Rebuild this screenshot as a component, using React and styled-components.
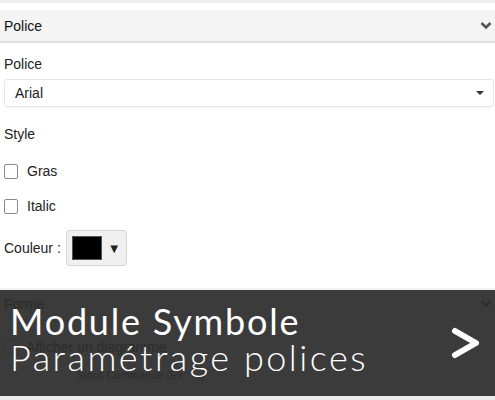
import styled, { createGlobalStyle } from 'styled-components';

const Global = createGlobalStyle`
  html, body {
    margin: 0;
    padding: 0;
    background: #fff;
    font-family: 'Liberation Sans', Arial, sans-serif;
    color: #222;
  }
`;

const Page = styled.div`
  position: relative;
  width: 495px;
  height: 400px;
  overflow: hidden;
  background: #fff;
`;

const TopStrip = styled.div`
  height: 3px;
  background: #efefef;
  margin-bottom: 7px;
`;

const SectionHeader = styled.div`
  display: flex;
  align-items: center;
  justify-content: space-between;
  height: 31px;
  padding: 0 3px 0 4px;
  background: #f4f4f4;
  border-bottom: 2px solid #dedede;
  font-size: 14px;
  color: #111;
`;

const Body = styled.div`
  display: flex;
  flex-direction: column;
  padding: 0 1px 0 4px;
  font-size: 14px;
`;

const Label = styled.div`
  height: 20px;
  line-height: 20px;
  margin-top: ${(p) => p.top || 0}px;
  color: #222;
`;

const Select = styled.div`
  display: flex;
  align-items: center;
  justify-content: space-between;
  height: 26px;
  margin-top: 5px;
  padding: 0 9px 0 10px;
  border: 1px solid #e6e6e6;
  border-radius: 3px;
  box-shadow: 0 1px 1px rgba(0, 0, 0, 0.03);
`;

const Caret = styled.span`
  width: 0;
  height: 0;
  border-left: 4px solid transparent;
  border-right: 4px solid transparent;
  border-top: 4px solid #333;
`;

const CheckRow = styled.label`
  display: flex;
  align-items: center;
  gap: 9px;
  height: 20px;
  margin-top: ${(p) => p.top}px;
`;

const Box = styled.span`
  width: 12px;
  height: 13px;
  border: 1px solid #8a8a8a;
  border-radius: 2px;
  background: #fff;
`;

const ColorRow = styled.div`
  display: flex;
  align-items: center;
  gap: 5px;
  margin-top: 14px;
`;

const ColorButton = styled.div`
  display: flex;
  align-items: center;
  gap: 6px;
  height: 34px;
  padding: 0 5px;
  border: 1px solid #d6d6d6;
  border-radius: 3px;
  background: #f0f0f0;
  font-size: 13px;
  color: #222;
`;

const Swatch = styled.span`
  width: 28px;
  height: 22px;
  background: ${(p) => p.color};
  border: 1px solid #555;
`;

const Faded = styled.div`
  margin-top: 22px;
`;

const Sub = styled.div`
  margin-top: ${(p) => p.top}px;
  padding-left: ${(p) => p.indent || 0}px;
  font-size: ${(p) => p.size || 14}px;
  display: flex;
  align-items: center;
  gap: 8px;
`;

const BottomStrip = styled.div`
  position: absolute;
  left: 0;
  right: 0;
  bottom: 0;
  height: 4px;
  background: #ececec;
`;

const Banner = styled.div`
  position: absolute;
  left: 0;
  right: 0;
  top: 290px;
  height: 106px;
  background: rgba(44, 44, 44, 0.93);
  display: flex;
  align-items: center;
  justify-content: space-between;
  padding: 0 14px 0 10px;
  box-sizing: border-box;
  color: #fff;
`;

const Titles = styled.div`
  display: flex;
  flex-direction: column;
  margin-top: -8px;
  font-family: 'Lato', 'Noto Sans', sans-serif;
`;

const Title = styled.div`
  font-size: 36px;
  line-height: 36px;
  font-weight: ${(p) => p.weight};
  letter-spacing: ${(p) => p.spacing}px;
`;

const Chevron = () => (
  <svg width="12" height="9" viewBox="0 0 12 9">
    <path d="M1.5 2 L6 6.5 L10.5 2" fill="none" stroke="#555" strokeWidth="2.6" />
  </svg>
);

const Next = () => (
  <svg width="30" height="34" viewBox="0 0 30 34">
    <path d="M4 5 L25 17 L4 29" fill="none" stroke="#fff" strokeWidth="6" strokeLinecap="round" strokeLinejoin="round" />
  </svg>
);

export default function App() {
  return (
    <Page>
      <Global />
      <TopStrip />
      <SectionHeader>
        <span>Police</span>
        <Chevron />
      </SectionHeader>
      <Body>
        <Label top={11}>Police</Label>
        <Select>
          <span>Arial</span>
          <Caret />
        </Select>
        <Label top={17}>Style</Label>
        <CheckRow top={17}>
          <Box />
          Gras
        </CheckRow>
        <CheckRow top={15}>
          <Box />
          Italic
        </CheckRow>
        <ColorRow>
          <span>Couleur :</span>
          <ColorButton>
            <Swatch color="#000" />
            ▼
          </ColorButton>
        </ColorRow>
      </Body>
      <Faded>
        <SectionHeader>
          <span>Forme</span>
          <Chevron />
        </SectionHeader>
        <Body>
          <Sub top={18}>
            <Box />
            Afficher un diagramme
          </Sub>
          <Sub top={14} indent={72} size={11}>
            Stock Commande (Ex : ...)
          </Sub>
        </Body>
      </Faded>
      <BottomStrip />
      <Banner>
        <Titles>
          <Title weight={400} spacing={1.8}>Module Symbole</Title>
          <Title weight={300} spacing={2.5}>Paramétrage polices</Title>
        </Titles>
        <Next />
      </Banner>
    </Page>
  );
}
